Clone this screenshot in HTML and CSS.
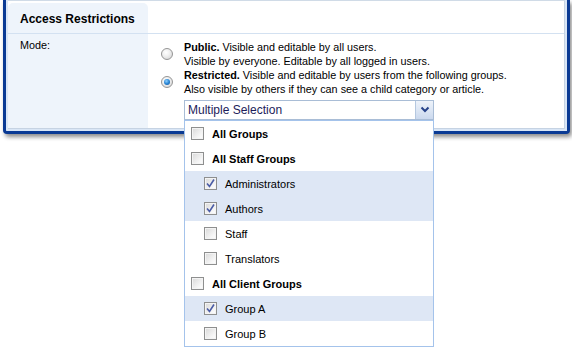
FILE: index.html
```html
<!DOCTYPE html>
<html lang="en">
<head>
    <meta charset="UTF-8">
    <title>Access Restrictions</title>
    <link rel="stylesheet" href="styles.css">
</head>
<body>
    <div class="window">
        <div class="panel">
            <div class="panel-head">
                <div class="panel-title">Access Restrictions</div>
                <div></div>
            </div>
            <div class="panel-body">
                <div class="field-label">Mode:</div>
                <div class="field-value">
                    <div class="option">
                        <span class="radio"></span>
                        <div class="option-text">
                            <div><strong>Public.</strong> Visible and editable by all users.</div>
                            <div>Visible by everyone. Editable by all logged in users.</div>
                        </div>
                    </div>
                    <div class="option">
                        <span class="radio checked"></span>
                        <div class="option-text">
                            <div><strong>Restricted.</strong> Visible and editable by users from the following groups.</div>
                            <div>Also visible by others if they can see a child category or article.</div>
                        </div>
                    </div>

                    <div class="select">
                        <div class="select-text">Multiple Selection</div>
                        <div class="select-arrow">
                            <svg width="10" height="8" viewBox="0 0 10 8">
                                <polyline points="1.5,1.5 5,5 8.5,1.5" fill="none" stroke="#27438a" stroke-width="2"/>
                            </svg>
                        </div>

                        <!-- open dropdown -->
                        <div class="select-list">
                            <div class="item group">
                                <span class="check"></span>All Groups
                            </div>
                            <div class="item group">
                                <span class="check"></span>All Staff Groups
                            </div>
                            <div class="item selected">
                                <span class="check"><svg width="11" height="11" viewBox="0 0 11 11"><polyline points="2,5.5 4.5,8.5 9,1.5" fill="none" stroke="#4a5ca6" stroke-width="1.6"/></svg></span>Administrators
                            </div>
                            <div class="item selected">
                                <span class="check"><svg width="11" height="11" viewBox="0 0 11 11"><polyline points="2,5.5 4.5,8.5 9,1.5" fill="none" stroke="#4a5ca6" stroke-width="1.6"/></svg></span>Authors
                            </div>
                            <div class="item">
                                <span class="check"></span>Staff
                            </div>
                            <div class="item">
                                <span class="check"></span>Translators
                            </div>
                            <div class="item group">
                                <span class="check"></span>All Client Groups
                            </div>
                            <div class="item selected">
                                <span class="check"><svg width="11" height="11" viewBox="0 0 11 11"><polyline points="2,5.5 4.5,8.5 9,1.5" fill="none" stroke="#4a5ca6" stroke-width="1.6"/></svg></span>Group A
                            </div>
                            <div class="item">
                                <span class="check"></span>Group B
                            </div>
                        </div>
                    </div>
                </div>
            </div>
        </div>
    </div>
</body>
</html>
```
FILE: styles.css
```css
html, body {
    height: 100%;
}
body {
    margin: 0;
    min-height: 348px;
    background: #fff;
    font-family: "Liberation Sans", Arial, sans-serif;
    font-size: 10.8px;
    color: #000;
}
.window {
    box-sizing: border-box;
    width: 567px;
    margin-left: 3px;
    padding: 0 2px 2px;
    background: #d9e6f6;
    border: 3px solid #0a3a94;
    border-top: 0;
    border-radius: 0 0 4px 4px;
    box-shadow: 2px 3px 4px rgba(0,0,0,0.45);
}
.panel {
    background: #fff;
    border: 1px solid #c6d3e3;
    border-left: 0;
    border-top-color: #d0dbe7;
}
.panel-head, .panel-body {
    display: grid;
    grid-template-columns: 140px 1fr;
}
.panel-head {
    padding-top: 2px;
    border-bottom: 1px solid #d3e1f1;
}
.panel-title {
    background: #eef4fb;
    border-radius: 5px 5px 0 0;
    padding: 8px 12px 6px;
    font-size: 12px;
    font-weight: bold;
    line-height: 16px;
}
.field-label {
    background: #eef4fb;
    padding: 4px 12px;
    line-height: 14px;
}
.field-value {
    padding: 6px 0 8px 13px;
}
.option {
    display: flex;
    align-items: center;
}
.option-text {
    line-height: 14px;
}
.radio {
    flex: none;
    box-sizing: border-box;
    width: 12px;
    height: 12px;
    margin-right: 11px;
    border: 1px solid #959595;
    border-radius: 50%;
    background: radial-gradient(circle at 40% 35%, #fff 0%, #f0f0f0 40%, #cfcfcf 100%);
    display: flex;
    align-items: center;
    justify-content: center;
}
.radio.checked::after {
    content: "";
    width: 6px;
    height: 6px;
    border-radius: 50%;
    background: radial-gradient(circle at 40% 35%, #8fd0ff 0%, #2a86d4 50%, #0b4f98 100%);
}
.select {
    position: relative;
    display: flex;
    box-sizing: border-box;
    width: 250px;
    height: 20px;
    margin: 4px 0 0 23px;
    border: 1px solid #a9bdd6;
    background: #fff;
}
.select-text {
    flex: 1;
    padding-left: 3px;
    font-size: 12px;
    line-height: 18px;
    color: #1c1c5a;
}
.select-arrow {
    width: 17px;
    border-left: 1px solid #b5c8e0;
    background: linear-gradient(#eef3fa, #cbd9ee);
    display: flex;
    align-items: center;
    justify-content: center;
}
.select-list {
    position: absolute;
    top: 19px;
    left: -1px;
    z-index: 2;
    box-sizing: border-box;
    width: 250px;
    background: #fff;
    border: 1px solid #a4c3eb;
}
.item {
    display: flex;
    align-items: center;
    height: 25px;
    padding-left: 19px;
    font-size: 11px;
}
.item.group {
    padding-left: 6px;
    font-weight: bold;
}
.item.selected {
    background: #dee7f5;
}
.check {
    flex: none;
    box-sizing: border-box;
    width: 13px;
    height: 13px;
    margin-right: 8px;
    border: 1px solid #8e8f8f;
    background: linear-gradient(135deg, #d8d8d8, #f6f6f6 70%, #fff);
    box-shadow: inset 0 0 0 1px #f4f4f4;
    display: flex;
    align-items: center;
    justify-content: center;
}
```
